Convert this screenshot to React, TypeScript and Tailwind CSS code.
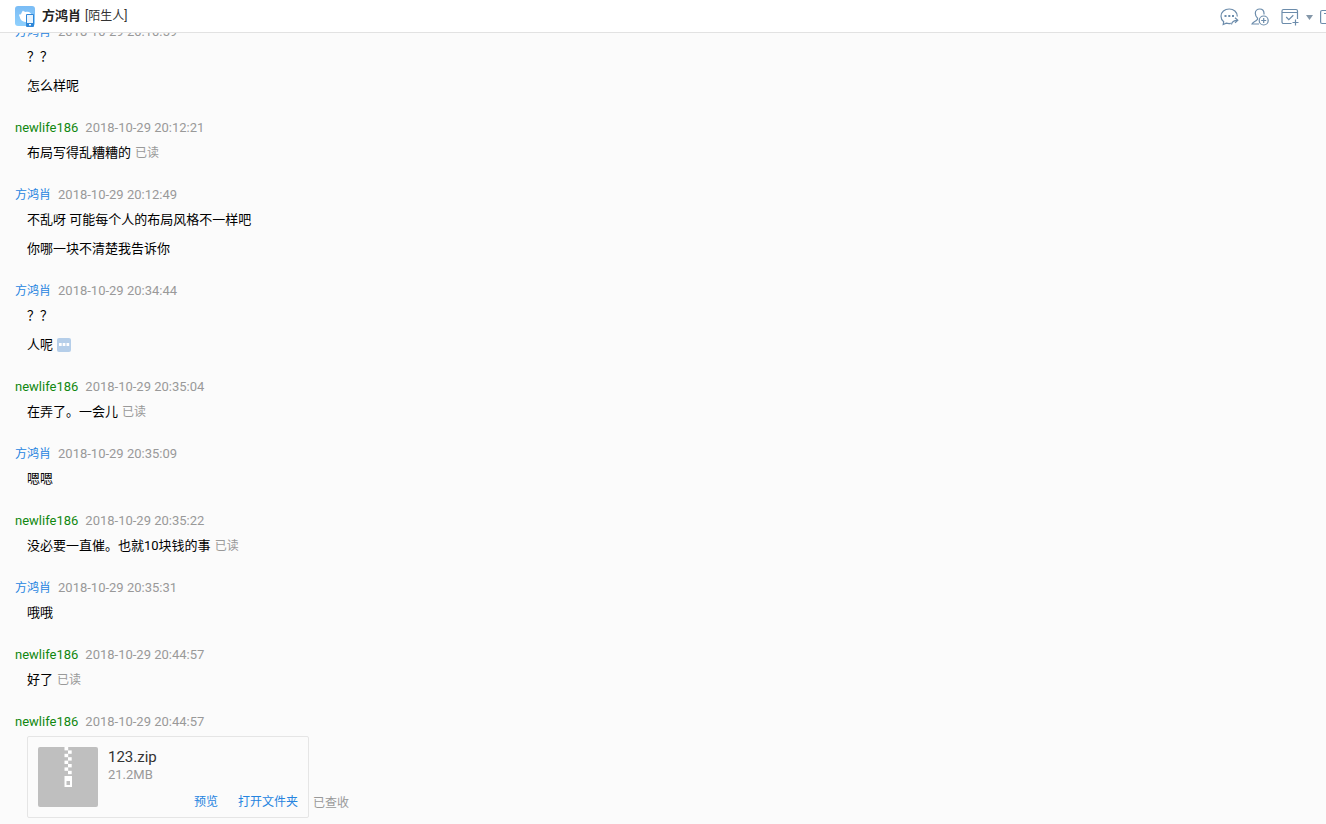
import React from 'react';

interface Message {
  text: string;
  read?: boolean;
  typing?: boolean;
}

interface Group {
  mine?: boolean;
  time: string;
  messages: Message[];
  file?: { name: string; size: string };
}

const CONTACT = '方鸿肖';
const ME = 'newlife186';

const groups: Group[] = [
  { time: '2018-10-29 20:10:59', messages: [{ text: '？？' }, { text: '怎么样呢' }] },
  { mine: true, time: '2018-10-29 20:12:21', messages: [{ text: '布局写得乱糟糟的', read: true }] },
  {
    time: '2018-10-29 20:12:49',
    messages: [{ text: '不乱呀 可能每个人的布局风格不一样吧' }, { text: '你哪一块不清楚我告诉你' }],
  },
  { time: '2018-10-29 20:34:44', messages: [{ text: '？？' }, { text: '人呢', typing: true }] },
  { mine: true, time: '2018-10-29 20:35:04', messages: [{ text: '在弄了。一会儿', read: true }] },
  { time: '2018-10-29 20:35:09', messages: [{ text: '嗯嗯' }] },
  { mine: true, time: '2018-10-29 20:35:22', messages: [{ text: '没必要一直催。也就10块钱的事', read: true }] },
  { time: '2018-10-29 20:35:31', messages: [{ text: '哦哦' }] },
  { mine: true, time: '2018-10-29 20:44:57', messages: [{ text: '好了', read: true }] },
  { mine: true, time: '2018-10-29 20:44:57', messages: [], file: { name: '123.zip', size: '21.2MB' } },
];

const Avatar = () => (
  <svg width="20" height="21" viewBox="0 0 20 21" className="shrink-0">
    <defs>
      <linearGradient id="sky" x1="0" y1="0" x2="0" y2="1">
        <stop offset="0" stopColor="#7abcf5" />
        <stop offset="1" stopColor="#8fd0fd" />
      </linearGradient>
    </defs>
    <rect width="20" height="20" rx="3" fill="url(#sky)" />
    <path d="M8 4.5C9 6 10.500 6 12 5.800c2.500-.2 4 1.200 4.500 3.200V15c-2.500 1.500-5.500 1.500-8 .5C6 14.500 5 12.800 4.800 11 4.300 10.300 4 9.500 4 8.500c1 .2 1.700 0 2.200-.8C6.700 6.500 7.200 5.300 8 4.500z" fill="#fff" />
    <rect x="11" y="8" width="8" height="13" rx="1" fill="#2f87d8" />
    <rect x="12" y="9" width="6" height="8" fill="#e9f4fd" />
    <rect x="14" y="18" width="2" height="1.5" fill="#fff" />
  </svg>
);

const ChatIcon = () => (
  <svg width="19" height="18" viewBox="0 0 19 18" fill="none" stroke="#6c8cab" strokeWidth="1.2">
    <path d="M17.3 8.5C17.3 4 13.7 1 9.200 1S1 4 1 8.2c0 2.3 1 4.2 2.7 5.5L3.2 16.5l3-1.4c1.5.5 3 .6 4.6.3" />
    <path d="M11.5 16.5c.3-2.600 2-4.200 6-4.200M15 9.8l2.8 2.5L15 14.900" />
    <path d="M4.500 8h2M8.300 8h2M12 8h2" strokeWidth="1.8" />
  </svg>
);

const AddPersonIcon = () => (
  <svg width="18" height="18" viewBox="0 0 18 18" fill="none" stroke="#6c8cab" strokeWidth="1.2">
    <path d="M13 6.500V5.300C13 2.700 11.200 1 8.800 1S4.300 2.700 4.300 5.300c0 2 .9 3.700 2.300 4.900.3 1.100-.4 1.800-1.600 2.500C3.200 13.700 1.500 14.500 1 16h7" />
    <circle cx="12.700" cy="12.500" r="4.500" />
    <path d="M12.700 10v5M10.200 12.500h5" />
  </svg>
);

const TaskIcon = () => (
  <svg width="18" height="18" viewBox="0 0 18 18" fill="none" stroke="#6c8cab" strokeWidth="1.2">
    <path d="M10.500 15.500h-8A1.500 1.500 0 0 1 1 14V3a1.500 1.500 0 0 1 1.500-1.500H15A1.500 1.500 0 0 1 16.500 3v8M1 4.500h15.500" />
    <path d="M5.200 9l2.600 2.600 4.500-4.400M14.500 11.500v6M11.500 14.500h6" />
  </svg>
);

const WindowIcon = () => (
  <svg width="18" height="18" viewBox="0 0 18 18" fill="none" stroke="#6c8cab" strokeWidth="1.2">
    <rect x=".6" y="2.5" width="16" height="13" rx="1.5" />
    <path d="M4 5.500h9" />
  </svg>
);

const ZipIcon = () => (
  <svg width="60" height="60" viewBox="0 0 60 60" className="shrink-0">
    <rect width="60" height="60" rx="2" fill="#bfbfbf" />
    {[0, 1, 2, 3, 4, 5, 6, 7].map((i) => (
      <rect key={i} x={i % 2 ? 30 : 26.5} y={i * 3.4} width="3.7" height="3.4" fill="#fff" />
    ))}
    <path d="M26.500 29H34v11h-7.500zM28.500 34v4H32v-4z" fill="#fff" fillRule="evenodd" />
  </svg>
);

const TypingBadge = () => (
  <svg width="14" height="14" viewBox="0 0 14 14" className="ml-1">
    <rect width="14" height="14" rx="2" fill="#b5cee9" />
    <path d="M2 5h2.700v3H2zM5.700 5h2.700v3H5.700zM9.500 5h2.700v3H9.500z" fill="#fff" />
  </svg>
);

const FileCard = ({ name, size }: { name: string; size: string }) => (
  <div className="mt-1 ml-3 flex items-end gap-1">
    <div className="flex w-[282px] gap-[10px] rounded-xs border border-[#e5e5e5] p-[10px]">
      <ZipIcon />
      <div className="flex flex-1 flex-col">
        <span className="text-[15px] leading-5 text-[#333]">{name}</span>
        <span className="text-[13px] leading-4 text-[#999]">{size}</span>
        <div className="mt-auto flex justify-end gap-5 text-xs text-[#2584e0]">
          <button className="-mb-1 leading-[18px]">预览</button>
          <button className="-mb-1 leading-[18px]">打开文件夹</button>
        </div>
      </div>
    </div>
    <span className="mb-1 text-xs leading-[22px] text-[#999]">已查收</span>
  </div>
);

const MessageGroup = ({ mine, time, messages, file }: Group) => (
  <section className="mb-[18px]">
    <div className="flex h-5 items-center gap-[7px] text-[13px]">
      {mine ? (
        <span className="text-[#118811]">{ME}</span>
      ) : (
        <span className="text-xs text-[#2584e0]">{CONTACT}</span>
      )}
      <time className="text-[#999]">{time}</time>
    </div>
    {messages.map((m) => (
      <div key={m.text} className="ml-3 flex h-[29px] items-center text-[13px] text-black">
        <p>{m.text}</p>
        {m.typing && <TypingBadge />}
        {m.read && <span className="ml-1 text-xs text-[#999]">已读</span>}
      </div>
    ))}
    {file && <FileCard {...file} />}
  </section>
);

export default function App() {
  return (
    <div className="flex h-screen flex-col overflow-hidden bg-[#fbfbfb] font-[Roboto,'Noto_Sans_CJK_SC',sans-serif]">
      <header className="z-10 flex h-[33px] shrink-0 items-center border-b border-[#e2e2e2] bg-white pl-[15px]">
        <Avatar />
        <h1 className="ml-[7px] text-[13px] font-bold text-[#222]">{CONTACT}</h1>
        <span className="ml-1 text-xs text-[#333]">[陌生人]</span>

        {/* Toolbar, the last button runs past the window edge */}
        <div className="-mr-3 ml-auto flex items-center gap-3 pt-0.5">
          <button aria-label="消息"><ChatIcon /></button>
          <button aria-label="加好友"><AddPersonIcon /></button>
          <div className="flex items-center gap-[7px]">
            <button aria-label="任务"><TaskIcon /></button>
            <button aria-label="更多">
              <svg width="7" height="5" viewBox="0 0 7 5"><path d="M0 0h7L3.500 5z" fill="#8497a9" /></svg>
            </button>
            <button aria-label="窗口"><WindowIcon /></button>
          </div>
        </div>
      </header>

      {/* Scrolled so that the first group is partly under the header */}
      <main className="-mt-[11px] flex-1 pl-[15px]">
        {groups.map((g, i) => (
          <MessageGroup key={i} {...g} />
        ))}
      </main>
    </div>
  );
}
